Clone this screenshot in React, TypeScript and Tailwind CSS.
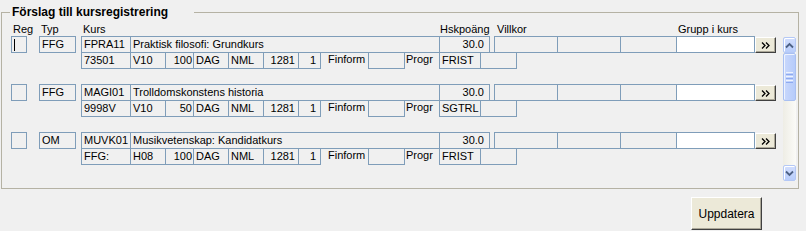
import React from "react";

type Row = {
  typ: string;
  code: string;
  name: string;
  hp: string;
  l2: string[];
  progr: string;
  caret?: boolean;
};

const rows: Row[] = [
  { typ: "FFG", code: "FPRA11", name: "Praktisk filosofi: Grundkurs", hp: "30.0", l2: ["73501", "V10", "100", "DAG", "NML", "1281", "1"], progr: "FRIST", caret: true },
  { typ: "FFG", code: "MAGI01", name: "Trolldomskonstens historia", hp: "30.0", l2: ["9998V", "V10", "50", "DAG", "NML", "1281", "1"], progr: "SGTRL" },
  { typ: "OM", code: "MUVK01", name: "Musikvetenskap: Kandidatkurs", hp: "30.0", l2: ["FFG:", "H08", "100", "DAG", "NML", "1281", "1"], progr: "FRIST" },
];

function Box({ className = "", children }: { className?: string; children?: React.ReactNode }) {
  return (
    <div className={"h-[17px] shrink-0 border border-[#7f9db9] flex items-center whitespace-nowrap overflow-hidden leading-none " + className}>
      {children}
    </div>
  );
}

function XpButton({ className = "", children }: { className?: string; children?: React.ReactNode }) {
  return (
    <div className={"shrink-0 flex items-center justify-center bg-[#ece9d8] border border-t-white border-l-white border-r-[#404040] border-b-[#404040] shadow-[inset_-1px_-1px_0_#aca899] " + className}>
      {children}
    </div>
  );
}

function DoubleChevron() {
  return (
    <svg width="9" height="7" viewBox="0 0 9 7">
      <path d="M1 0.5 L4 3.5 L1 6.5 M5 0.5 L8 3.5 L5 6.5" fill="none" stroke="#000" strokeWidth="1.3" />
    </svg>
  );
}

function CourseRow({ r }: { r: Row }) {
  return (
    <div className="flex items-start h-[48px]">
      <Box className="ml-px w-[16px] pl-[2px]">
        {r.caret && <div className="w-px h-[12px] bg-black" />}
      </Box>
      <Box className="ml-[12px] w-[37px] pl-[2px]">{r.typ}</Box>
      <div className="ml-[5px] flex flex-col">
        <div className="flex items-start">
          <Box className="w-[50px] pl-[2px]">{r.code}</Box>
          <Box className="-ml-px w-[310px] pl-[2px]">{r.name}</Box>
          <Box className="-ml-px w-[51px] justify-end pr-[5px]">{r.hp}</Box>
          <Box className="ml-[4px] w-[64px]" />
          <Box className="-ml-px w-[64px]" />
          <Box className="-ml-px w-[57px]" />
          <Box className="-ml-px w-[79px] bg-white" />
          <XpButton className="mt-px w-[21px] h-[16px]">
            <DoubleChevron />
          </XpButton>
        </div>
        <div className="flex items-start -mt-px">
          <Box className="w-[50px] pl-[2px]">{r.l2[0]}</Box>
          <Box className="-ml-px w-[36px] pl-[2px]">{r.l2[1]}</Box>
          <Box className="-ml-px w-[29px] justify-end pr-px">{r.l2[2]}</Box>
          <Box className="-ml-px w-[36px] pl-[2px]">{r.l2[3]}</Box>
          <Box className="-ml-px w-[36px] pl-[2px]">{r.l2[4]}</Box>
          <Box className="-ml-px w-[36px] justify-end pr-[3px]">{r.l2[5]}</Box>
          <Box className="-ml-px w-[23px] justify-end pr-[4px]">{r.l2[6]}</Box>
          <div className="w-[47px] h-[15px] shrink-0 flex items-center pl-[7px] whitespace-nowrap">Finform</div>
          <Box className="w-[37px]" />
          <div className="w-[34px] h-[15px] shrink-0 flex items-center pl-px whitespace-nowrap">Progr</div>
          <Box className="w-[42px] pl-[2px]">{r.progr}</Box>
          <Box className="-ml-px w-[37px]" />
        </div>
      </div>
    </div>
  );
}

function Chevron({ up }: { up?: boolean }) {
  return (
    <svg width="9" height="7" viewBox="0 0 9 7">
      <path
        d={up ? "M1 5.5 L4.5 2 L8 5.5" : "M1 1.5 L4.5 5 L8 1.5"}
        fill="none"
        stroke="#4d6185"
        strokeWidth="1.8"
      />
    </svg>
  );
}

function Scrollbar() {
  return (
    <div className="mt-px w-[13px] h-[144px] flex flex-col bg-gradient-to-r from-[#eeede5] to-[#fbfbf8]">
      <div className="h-[16px] w-[13px] rounded-[2px] border border-[#b4c8f6] bg-gradient-to-b from-[#d2defd] to-[#b8cdfb] flex items-center justify-center shadow-[inset_1px_1px_0_#fff]">
        <Chevron up />
      </div>
      <div className="h-[48px] w-[13px] rounded-[2px] border border-[#a9c0f2] bg-gradient-to-r from-[#c9d8fc] to-[#b6cbfa] flex flex-col items-center justify-center gap-px shadow-[inset_1px_1px_0_#eef3fe]">
        <div className="w-[7px] h-px bg-[#eef3fe]" />
        <div className="w-[7px] h-px bg-[#8eaaf0]" />
        <div className="w-[7px] h-px bg-[#eef3fe]" />
        <div className="w-[7px] h-px bg-[#8eaaf0]" />
        <div className="w-[7px] h-px bg-[#eef3fe]" />
        <div className="w-[7px] h-px bg-[#8eaaf0]" />
      </div>
      <div className="flex-1" />
      <div className="h-[16px] w-[13px] rounded-[2px] border border-[#b4c8f6] bg-gradient-to-b from-[#d2defd] to-[#b8cdfb] flex items-center justify-center shadow-[inset_1px_1px_0_#fff]">
        <Chevron />
      </div>
    </div>
  );
}

export default function App() {
  return (
    <div className="w-[806px] h-[231px] bg-[#f0f0f0] text-black text-[11px] font-['Liberation_Sans',Arial,sans-serif] overflow-hidden">
      <div className="pl-px">
        <fieldset className="mt-[4px] w-[798px] border border-[#b5b2a4] pl-[8px] pr-[2px] pt-[2px] pb-[7px]">
          <legend className="w-[184px] pl-[2px] text-[12px] font-bold leading-[16px]">
            Förslag till kursregistrering
          </legend>
          <div className="flex h-[14px] items-center whitespace-nowrap">
            <div className="w-[31px] pl-[3px]">Reg</div>
            <div className="w-[42px]">Typ</div>
            <div className="w-[357px]">Kurs</div>
            <div className="w-[57px]">Hskpoäng</div>
            <div className="w-[181px]">Villkor</div>
            <div>Grupp i kurs</div>
          </div>
          <div className="flex h-[145px]">
            <div className="flex-1 flex flex-col">
              {rows.map((r) => (
                <CourseRow key={r.code} r={r} />
              ))}
            </div>
            <Scrollbar />
          </div>
        </fieldset>
      </div>
      <div className="flex justify-end pr-[44px] mt-[8px]">
        <XpButton className="w-[71px] h-[33px]">
          <span className="text-[12px]">Uppdatera</span>
        </XpButton>
      </div>
    </div>
  );
}
